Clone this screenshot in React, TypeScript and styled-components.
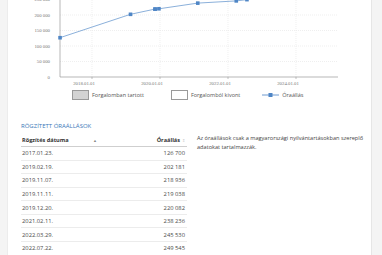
import React from "react";
import styled, { createGlobalStyle } from "styled-components";

const Global = createGlobalStyle`
  html, body { margin: 0; padding: 0; background: #f4f4f4; }
  body { font-family: "Open Sans", "Liberation Sans", sans-serif; color: #444; }
`;

const Card = styled.div`
  margin-left: 7px;
  width: 365px;
  min-height: 255px;
  background: #fff;
  border-left: 1px solid #ececec;
  border-right: 1px solid #e6e6e6;
  box-sizing: border-box;
`;

const ChartSvg = styled.svg`
  display: block;
`;

const Legend = styled.div`
  display: flex;
  align-items: center;
  height: 14px;
  padding-left: 64px;
`;

const LegendItem = styled.div<{ $gap: number }>`
  display: flex;
  align-items: center;
  gap: 3px;
  margin-right: ${(p) => p.$gap}px;
  font-size: 5.5px;
  color: #555;
`;

const Swatch = styled.span<{ $fill: string }>`
  display: block;
  width: 15px;
  height: 8px;
  background: ${(p) => p.$fill};
  border: 1px solid #9a9a9a;
`;

const Section = styled.div`
  padding: 19px 0 0 13px;
`;

const Title = styled.div`
  font-size: 6px;
  line-height: 10px;
  color: #3b78b8;
  text-transform: uppercase;
`;

const Columns = styled.div`
  display: flex;
  gap: 10px;
  margin-top: 3px;
`;

const Table = styled.div`
  width: 166px;
`;

const Row = styled.div<{ $head?: boolean }>`
  display: grid;
  grid-template-columns: 1fr 60px;
  align-items: center;
  height: ${(p) => (p.$head ? 13 : 13.57)}px;
  box-sizing: border-box;
  border-bottom: 1px solid ${(p) => (p.$head ? "#cfcfcf" : "#ececec")};
  font-size: ${(p) => (p.$head ? 5.6 : 5.8)}px;
  font-weight: ${(p) => (p.$head ? 700 : 400)};
  color: ${(p) => (p.$head ? "#333" : "#4a4a4a")};
  padding: 0 2px 0 1px;
`;

const Cell = styled.div<{ $right?: boolean }>`
  display: flex;
  align-items: center;
  justify-content: ${(p) => (p.$right ? "flex-end" : "space-between")};
  gap: 2px;
`;

const Sort = styled.span<{ $dim?: boolean }>`
  font-size: 4px;
  font-weight: 400;
  color: ${(p) => (p.$dim ? "#c8c8c8" : "#888")};
  margin-right: ${(p) => (p.$dim ? 0 : 28)}px;
`;

const Note = styled.div`
  width: 174px;
  font-size: 5.6px;
  line-height: 9px;
  color: #444;
`;

const rows: [string, string][] = [
  ["2017.01.23.", "126 700"],
  ["2019.02.19.", "202 181"],
  ["2019.11.07.", "218 936"],
  ["2019.11.11.", "219 038"],
  ["2019.12.20.", "220 082"],
  ["2021.02.11.", "238 236"],
  ["2022.03.29.", "245 530"],
  ["2022.07.22.", "249 545"],
];

const yFor = (v: number) => 77 - (v / 50000) * 15.5;
const xFor = (y: number, m: number, d: number) => {
  const t = y + (m - 1) / 12 + (d - 1) / 365;
  return 92 + (t - 2018) * 34;
};

const pts = rows.map(([d, v]) => {
  const [y, m, dd] = d.split(".").map(Number);
  return [xFor(y, m, dd), yFor(Number(v.replace(" ", "")))] as [number, number];
});

const fmt = (v: number) => (v === 0 ? "0" : `${Math.floor(v / 1000)} 000`);

function Chart() {
  const yTicks = [0, 50000, 100000, 150000, 200000, 250000];
  const xTicks = [
    { x: 92, l: "2018.01.01" },
    { x: 160, l: "2020.01.01" },
    { x: 228, l: "2022.01.01" },
    { x: 296, l: "2024.01.01" },
  ];
  const lineD =
    pts.map((p, i) => `${i ? "L" : "M"}${p[0].toFixed(1)},${p[1].toFixed(1)}`).join(" ") +
    ` L256,-3`;
  return (
    <ChartSvg width={363} height={88} viewBox="8 0 363 88">
      {yTicks.map((v) => (
        <g key={v}>
          {v > 0 && (
            <line x1={60} x2={338} y1={yFor(v)} y2={yFor(v)} stroke="#e4e4e4" strokeWidth={0.6} strokeDasharray="1 1" />
          )}
          <text x={50} y={yFor(v) + 1.6} fontSize={4.8} fill="#777" textAnchor="end" fontFamily="Liberation Serif, serif">
            {fmt(v)}
          </text>
        </g>
      ))}
      {xTicks.map((t) => (
        <g key={t.x}>
          <line x1={t.x} x2={t.x} y1={-2} y2={77} stroke="#e6e6e6" strokeWidth={0.6} strokeDasharray="1 1" />
          <line x1={t.x} x2={t.x} y1={77} y2={79} stroke="#999" strokeWidth={0.6} />
          <text x={t.x - 8} y={85} fontSize={4.8} fill="#777" textAnchor="middle" fontFamily="Liberation Serif, serif">
            {t.l}
          </text>
        </g>
      ))}
      <line x1={60} x2={60} y1={-2} y2={77} stroke="#9a9a9a" strokeWidth={0.7} />
      <line x1={60} x2={338} y1={77} y2={77} stroke="#9a9a9a" strokeWidth={0.7} />
      <path d={lineD} fill="none" stroke="#7ea7d6" strokeWidth={0.9} />
      {pts.map((p, i) => (
        <rect key={i} x={p[0] - 1.8} y={p[1] - 1.8} width={3.6} height={3.6} fill="#4f86c6" />
      ))}
    </ChartSvg>
  );
}

export default function App() {
  return (
    <>
      <Global />
      <Card>
        <Chart />
        <Legend>
          <LegendItem $gap={27}>
            <Swatch $fill="#d3d3d3" />
            Forgalomban tartott
          </LegendItem>
          <LegendItem $gap={22}>
            <Swatch $fill="#ffffff" />
            Forgalomból kivont
          </LegendItem>
          <LegendItem $gap={0}>
            <svg width={17} height={6} viewBox="0 0 17 6">
              <line x1={0} x2={17} y1={3} y2={3} stroke="#6f9ad0" strokeWidth={1} />
              <rect x={6.5} y={1} width={4} height={4} fill="#4f86c6" />
            </svg>
            Óraállás
          </LegendItem>
        </Legend>
        <Section>
          <Title>Rögzített óraállások</Title>
          <Columns>
            <Table>
              <Row $head>
                <Cell>
                  Rögzítés dátuma <Sort>▲</Sort>
                </Cell>
                <Cell $right>
                  Óraállás <Sort $dim>⇕</Sort>
                </Cell>
              </Row>
              {rows.map(([d, v]) => (
                <Row key={d}>
                  <Cell>{d}</Cell>
                  <Cell $right>{v}</Cell>
                </Row>
              ))}
            </Table>
            <Note>
              Az óraállások csak a magyarországi nyilvántartásokban szereplő adatokat tartalmazzák.
            </Note>
          </Columns>
        </Section>
      </Card>
    </>
  );
}
